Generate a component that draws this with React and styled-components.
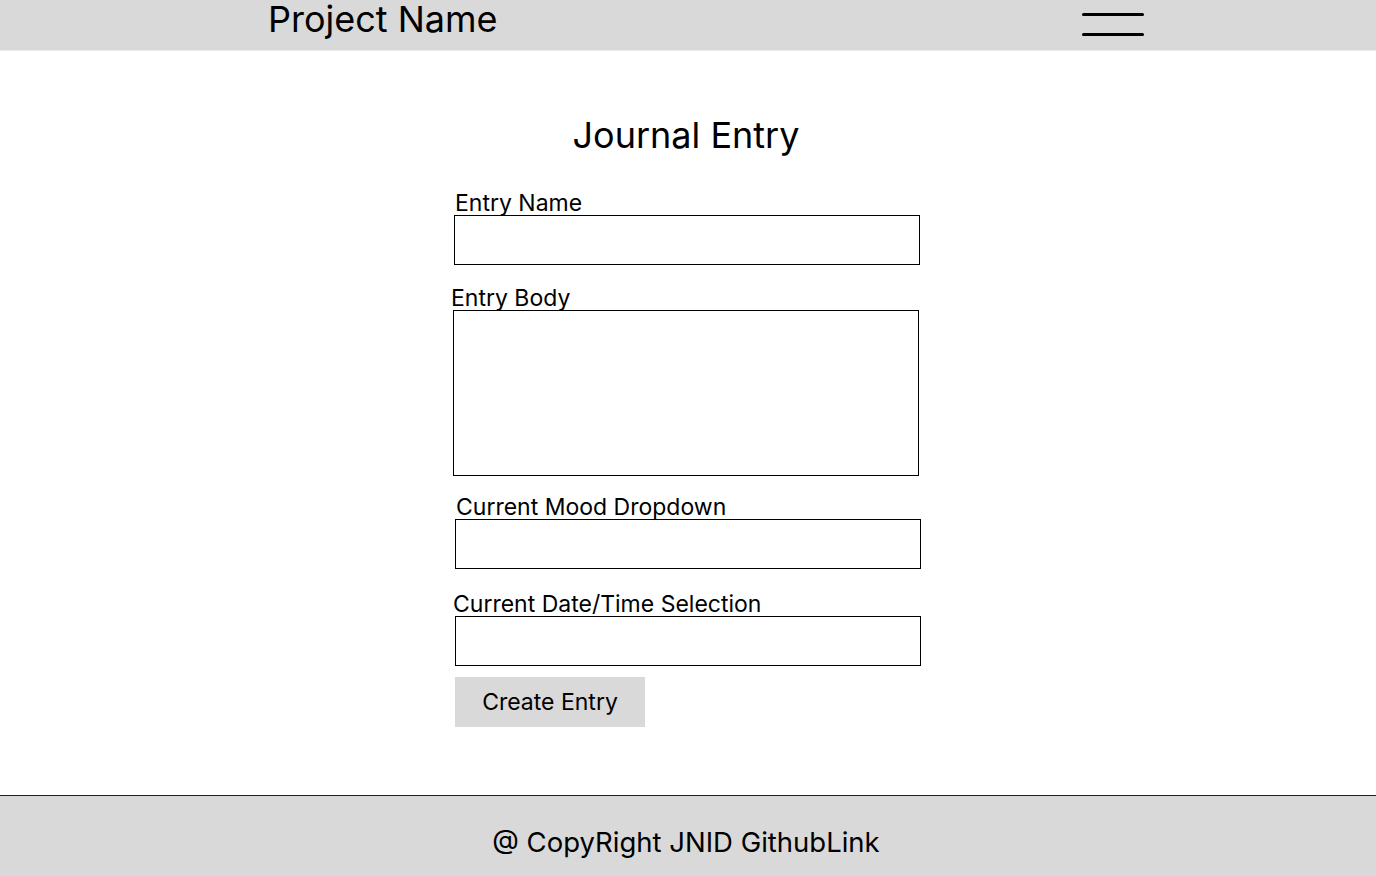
import styled, { createGlobalStyle } from 'styled-components';

const GlobalStyle = createGlobalStyle`
  html, body {
    margin: 0;
    padding: 0;
    background: #ffffff;
    font-family: 'Inter', 'Noto Sans', sans-serif;
    color: #000000;
  }
`;

const Page = styled.div`
  min-height: 876px;
  display: flex;
  flex-direction: column;
`;

const Header = styled.header`
  height: 50px;
  background-color: #d9d9d9;
  border-bottom: 1px solid #ececec;
  display: flex;
  align-items: center;
  justify-content: space-between;
  padding: 0 232px 0 268px;
`;

const ProjectName = styled.div`
  font-size: 36px;
  line-height: 38px;
  margin-top: -12px;
`;

const MenuButton = styled.button`
  width: 62px;
  height: 23px;
  padding: 0;
  border: none;
  background: transparent;
  display: flex;
  flex-direction: column;
  justify-content: space-between;
  margin-top: -1px;
`;

const MenuLine = styled.span`
  display: block;
  height: 3px;
  width: 100%;
  border-radius: 2px;
  background-color: #000000;
`;

const Main = styled.main`
  flex: 1;
  display: flex;
  flex-direction: column;
  align-items: center;
  padding-top: 62px;
`;

const Title = styled.h1`
  margin: 0 0 0 -4px;
  font-size: 36px;
  font-weight: 400;
  line-height: 44px;
`;

const Form = styled.form`
  width: 468px;
  display: flex;
  flex-direction: column;
  gap: 20px;
  margin-top: 34px;
`;

const Field = styled.label`
  display: flex;
  flex-direction: column;
  margin-left: ${(props) => props.shift || 0}px;
  margin-top: ${(props) => props.space || 0}px;
`;

const LabelText = styled.span`
  font-size: 23px;
  line-height: 24px;
  margin-left: ${(props) => props.indent || 0}px;
`;

const TextInput = styled.input`
  box-sizing: border-box;
  width: 466px;
  height: 50px;
  margin: 0;
  border: 1px solid #000000;
  border-radius: 0;
  background: #ffffff;
  font-family: inherit;
  font-size: 18px;
  padding: 0 10px;
  outline: none;
`;

const TextArea = styled.textarea`
  box-sizing: border-box;
  width: 466px;
  height: 166px;
  margin: 0;
  border: 1px solid #000000;
  border-radius: 0;
  background: #ffffff;
  font-family: inherit;
  font-size: 18px;
  padding: 8px 10px;
  resize: none;
  outline: none;
  display: block;
`;

const SubmitButton = styled.button`
  align-self: flex-start;
  width: 190px;
  height: 50px;
  margin-top: -9px;
  margin-left: 1px;
  border: none;
  background-color: #d9d9d9;
  font-family: inherit;
  font-size: 23px;
  color: #000000;
  cursor: pointer;
`;

const Footer = styled.footer`
  height: 80px;
  background-color: #d9d9d9;
  border-top: 1px solid #1e1e1e;
  display: flex;
  align-items: center;
  justify-content: center;
`;

const FooterText = styled.div`
  font-size: 27.5px;
  line-height: 32px;
  margin: 12px 0 0 -4px;
`;

export default function App() {
  return (
    <>
      <GlobalStyle />
      <Page>
        <Header>
          <ProjectName>Project Name</ProjectName>
          <MenuButton aria-label="Menu">
            <MenuLine />
            <MenuLine />
          </MenuButton>
        </Header>
        <Main>
          <Title>Journal Entry</Title>
          <Form onSubmit={(e) => e.preventDefault()}>
            <Field>
              <LabelText indent={1}>Entry Name</LabelText>
              <TextInput type="text" />
            </Field>
            <Field shift={-1} space={1}>
              <LabelText indent={-2}>Entry Body</LabelText>
              <TextArea />
            </Field>
            <Field shift={1} space={-1}>
              <LabelText indent={1}>Current Mood Dropdown</LabelText>
              <TextInput type="text" />
            </Field>
            <Field shift={1} space={3}>
              <LabelText indent={-2}>Current Date/Time Selection</LabelText>
              <TextInput type="text" />
            </Field>
            <SubmitButton type="submit">Create Entry</SubmitButton>
          </Form>
        </Main>
        <Footer>
          <FooterText>@ CopyRight JNID GithubLink</FooterText>
        </Footer>
      </Page>
    </>
  );
}
